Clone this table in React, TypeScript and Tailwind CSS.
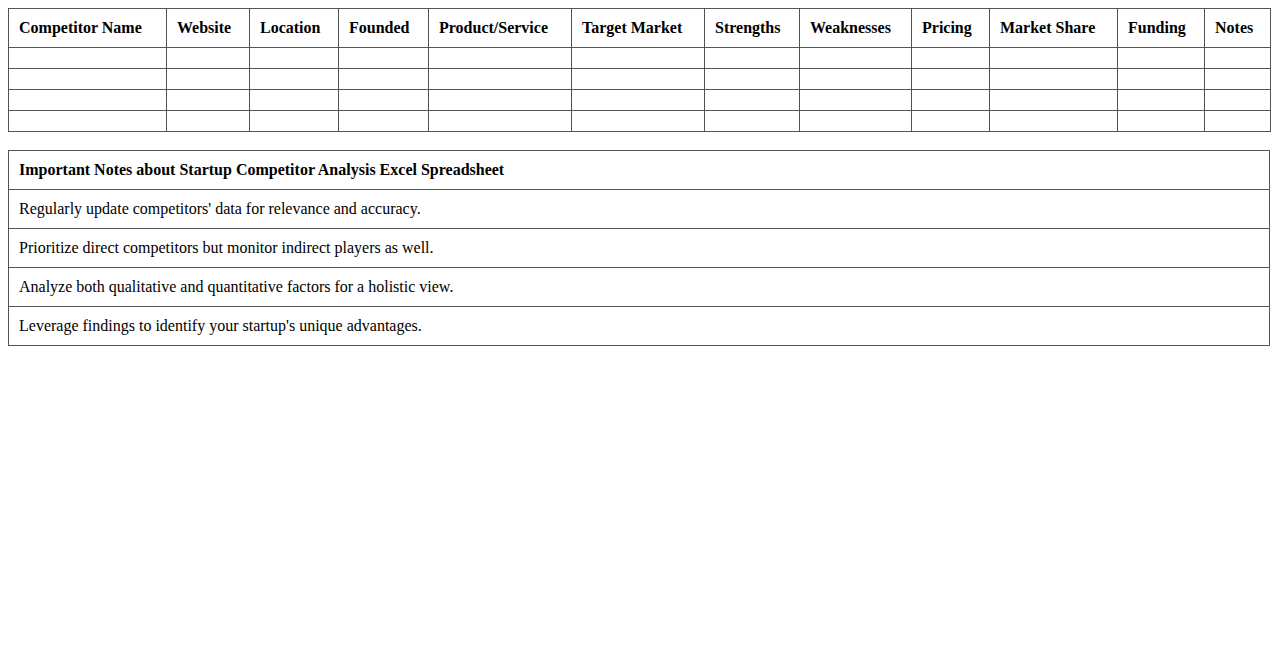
export default function App() {
    const headers = [
        ['Competitor Name', 'w-[158px]'],
        ['Website', 'w-[83px]'],
        ['Location', 'w-[89px]'],
        ['Founded', 'w-[90px]'],
        ['Product/Service', 'w-[143px]'],
        ['Target Market', 'w-[133px]'],
        ['Strengths', 'w-[95px]'],
        ['Weaknesses', 'w-[112px]'],
        ['Pricing', 'w-[78px]'],
        ['Market Share', 'w-[128px]'],
        ['Funding', 'w-[87px]'],
        ['Notes', 'w-[66px]'],
    ];
    const notes = [
        "Regularly update competitors' data for relevance and accuracy.",
        'Prioritize direct competitors but monitor indirect players as well.',
        'Analyze both qualitative and quantitative factors for a holistic view.',
        "Leverage findings to identify your startup's unique advantages.",
    ];

    return (
        <div className="min-h-screen bg-white p-2 text-black text-[16px] font-['Liberation_Serif','Times_New_Roman',serif]">
            <table className="w-full table-fixed border-collapse">
                <colgroup>
                    {headers.map(([h, w]) => <col key={h} className={w} />)}
                </colgroup>
                <thead>
                    <tr>
                        {headers.map(([h]) => (
                            <th key={h} className="border border-[#555] p-[10px] text-left font-bold leading-[18px] whitespace-nowrap">{h}</th>
                        ))}
                    </tr>
                </thead>
                <tbody>
                    {[0, 1, 2, 3].map(r => (
                        <tr key={r}>
                            {headers.map(([h]) => (
                                <td key={h} className="border border-[#555] p-[10px]"></td>
                            ))}
                        </tr>
                    ))}
                </tbody>
            </table>

            <table className="w-full border-collapse mt-[18px]">
                <thead>
                    <tr>
                        <th className="border border-[#555] p-[10px] text-left font-bold leading-[18px]">Important Notes about Startup Competitor Analysis Excel Spreadsheet</th>
                    </tr>
                </thead>
                <tbody>
                    {notes.map(n => (
                        <tr key={n}>
                            <td className="border border-[#555] p-[10px] leading-[18px]">{n}</td>
                        </tr>
                    ))}
                </tbody>
            </table>
        </div>
    );
}
